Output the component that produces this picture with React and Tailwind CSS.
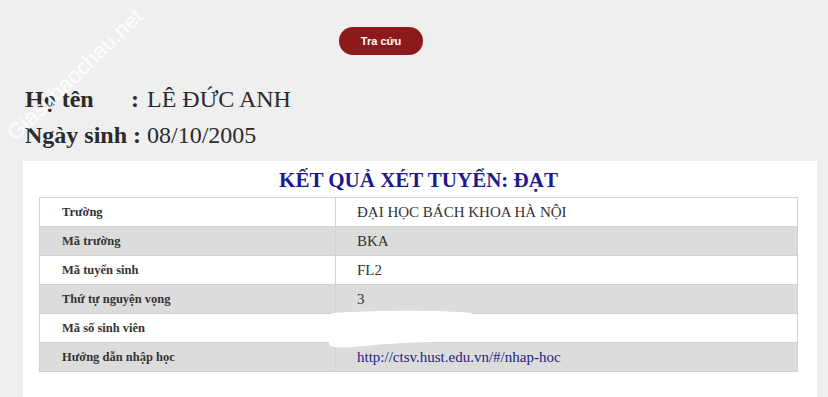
import React from "react";

const rows = [
  { label: "Trường", value: "ĐẠI HỌC BÁCH KHOA HÀ NỘI" },
  { label: "Mã trường", value: "BKA", gray: true },
  { label: "Mã tuyển sinh", value: "FL2" },
  { label: "Thứ tự nguyện vọng", value: "3", gray: true },
  { label: "Mã số sinh viên", value: "" },
  { label: "Hướng dẫn nhập học", value: "http://ctsv.hust.edu.vn/#/nhap-hoc", gray: true, link: true },
];

export default function App() {
  return (
    <div className="relative min-h-screen overflow-hidden bg-[#efefef] font-['Liberation_Serif',serif] text-[#2b2b2b]">
      {/* NUT TRA CUU */}
      <div className="flex pl-[339px] pt-[27px]">
        <button className="h-[28px] w-[84px] rounded-full bg-[#8c1a1d] font-['Liberation_Sans',sans-serif] text-[11px] font-bold text-white">
          Tra cứu
        </button>
      </div>

      {/* THONG TIN */}
      <div className="mt-[26px] pl-[25px] text-[24px] leading-[36px]">
        <div className="flex">
          <span className="inline-block w-[106px] font-bold">Họ tên</span>
          <span className="font-bold">:</span>
          <span className="ml-[8px]">LÊ ĐỨC ANH</span>
        </div>
        <div className="flex">
          <span className="font-bold">Ngày sinh :</span>
          <span className="ml-[6px]">08/10/2005</span>
        </div>
      </div>

      {/* KET QUA */}
      <div className="ml-[23px] mr-[11px] mt-[8px] bg-white pb-[40px] pl-[16px] pr-[19px] pt-[7px]">
        <h2 className="mb-[5px] text-center text-[21px] font-bold leading-[24px] text-[#1b1b8e]">
          KẾT QUẢ XÉT TUYỂN: ĐẠT
        </h2>
        <div className="border border-b-0 border-[#d2d2d2]">
          {rows.map((r) => (
            <div
              key={r.label}
              className={`grid h-[29px] grid-cols-[296px_1fr] border-b border-[#d2d2d2] ${r.gray ? "bg-[#dcdcdc]" : "bg-white"}`}
            >
              <div className="flex items-center border-r border-[#d2d2d2] pl-[22px] text-[12.5px] font-bold text-[#333]">
                {r.label}
              </div>
              <div
                className={`flex items-center pl-[21px] text-[15px] ${r.link ? "text-[#1e1e80]" : "text-[#333]"}`}
              >
                {r.value}
              </div>
            </div>
          ))}
        </div>
        <p className="mt-[21px] pl-[95px] text-[15px] text-[#333]">
          Thí sinh cần hoàn tất thủ tục xác nhận nhập học trực tuyến theo đúng hướng dẫn của Nhà trường
        </p>
      </div>

      {/* vet xoa trang */}
      <svg className="absolute left-[320px] top-[305px]" width="160" height="48" viewBox="0 0 160 48">
        <path
          d="M12 8 C60 5 120 5 152 8 L150 36 C110 37 70 38 45 41 C25 43 10 44 9 38 Z"
          fill="#fff"
        />
      </svg>

      {/* watermark */}
      <div className="absolute left-[-22px] top-[62px] w-[194px] -rotate-[44deg] text-center font-['Liberation_Sans',sans-serif] text-[22px] leading-[26px] text-white/90">
        Giasubaochau.net
      </div>
    </div>
  );
}
